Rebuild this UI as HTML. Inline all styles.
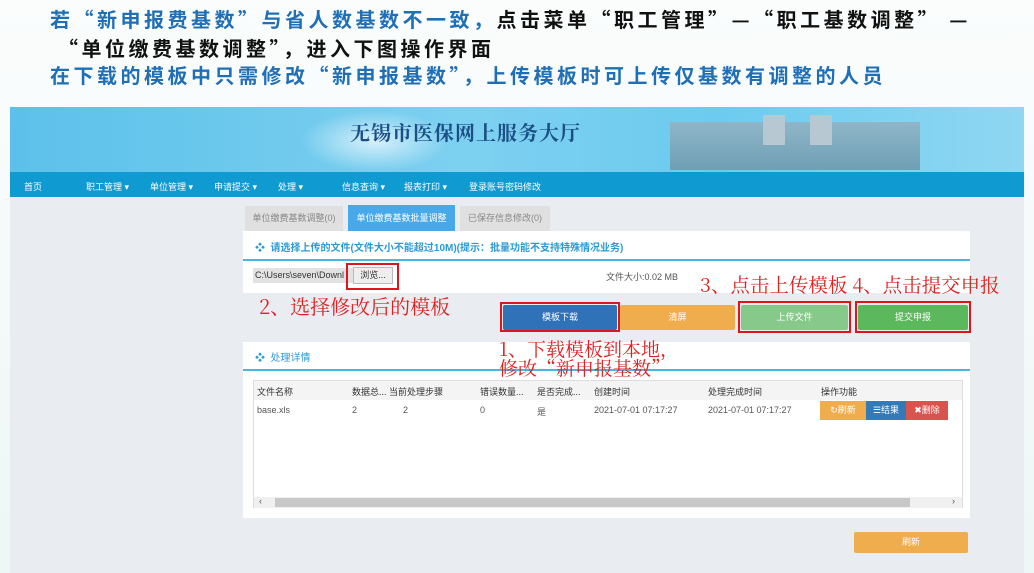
<!DOCTYPE html>
<html><head><meta charset="utf-8"><style>
*{margin:0;padding:0;box-sizing:border-box}
body{width:1034px;height:573px;position:relative;overflow:hidden;background:linear-gradient(#fbfdfd,#eef6f6);font-family:"Liberation Sans","Noto Sans CJK SC",sans-serif}
.a{position:absolute}
.h{font-family:"Noto Sans CJK SC",sans-serif;font-weight:bold;font-size:20px;color:#1f6fb7;left:50px;white-space:nowrap;letter-spacing:3.5px}
.k{color:#111}
.r{font-family:"Noto Serif CJK SC",serif;color:#e02020;font-size:20px;white-space:nowrap}
.nav span{position:absolute;top:8px;font-size:9px;color:#fff;white-space:nowrap}
.btn{position:absolute;top:305px;height:25px;color:#fff;font-size:9px;text-align:center;line-height:25px;border-radius:2px}
.box{position:absolute;border:2px solid #e0141c}
.th{position:absolute;top:385px;font-size:9px;color:#333;white-space:nowrap}
.td{position:absolute;top:405px;font-size:9px;color:#555;white-space:nowrap}
</style></head><body>
<div class="a h" style="top:4px">若“新申报费基数”与省人数基数不一致，<span class="k">点击菜单“职工管理”—“职工基数调整” —</span></div>
<div class="a h k" style="top:33px;left:58px">“单位缴费基数调整”，进入下图操作界面</div>
<div class="a h" style="top:60px">在下载的模板中只需修改“新申报基数”，上传模板时可上传仅基数有调整的人员</div>

<div class="a" style="left:10px;top:107px;width:1014px;height:65px;background:linear-gradient(90deg,#5cc1ea,#7dd0f0 45%,#6ccbef 70%,#8fd7f2)"></div>
<div class="a" style="left:300px;top:110px;width:150px;height:62px;background:radial-gradient(ellipse at center,rgba(255,255,255,.7),rgba(255,255,255,0) 70%)"></div>
<div class="a" style="left:670px;top:122px;width:250px;height:48px;background:linear-gradient(#8fb6c8,#6f9fb5)"></div>
<div class="a" style="left:763px;top:115px;width:22px;height:30px;background:#b7c8d2"></div>
<div class="a" style="left:810px;top:115px;width:22px;height:30px;background:#b7c8d2"></div>
<div class="a" style="left:350px;top:117px;font-family:'Noto Serif CJK SC',serif;font-weight:bold;font-size:20px;color:#1b4f86;letter-spacing:1px">无锡市医保网上服务大厅</div>

<div class="a nav" style="left:10px;top:172px;width:1014px;height:25px;background:#0f9ad1">
<span style="left:14px">首页</span><span style="left:76px">职工管理 ▾</span><span style="left:140px">单位管理 ▾</span><span style="left:204px">申请提交 ▾</span><span style="left:268px">处理 ▾</span><span style="left:332px">信息查询 ▾</span><span style="left:394px">报表打印 ▾</span><span style="left:459px">登录账号密码修改</span></div>

<div class="a" style="left:10px;top:197px;width:1014px;height:376px;background:#e9edf1"></div>
<div class="a" style="left:245px;top:206px;width:98px;height:25px;background:#e0e0e0;font-size:9px;color:#888;line-height:25px;text-align:center">单位缴费基数调整(0)</div>
<div class="a" style="left:348px;top:205px;width:107px;height:26px;background:#48a9ea;font-size:9px;color:#fff;line-height:26px;text-align:center">单位缴费基数批量调整</div>
<div class="a" style="left:460px;top:206px;width:90px;height:25px;background:#e0e0e0;font-size:9px;color:#888;line-height:25px;text-align:center">已保存信息修改(0)</div>

<div class="a" style="left:243px;top:231px;width:727px;height:62px;background:#fff"></div>
<div class="a" style="left:255px;top:239px;font-size:10px;font-weight:bold;color:#2a9ad6">❖ &nbsp;请选择上传的文件(文件大小不能超过10M)(提示：批量功能不支持特殊情况业务)</div>
<div class="a" style="left:243px;top:259px;width:727px;height:2px;background:#4ab5e3"></div>
<div class="a" style="left:253px;top:268px;width:105px;height:15px;background:#e2e2e2;font-size:9px;color:#333;line-height:15px;padding-left:2px;overflow:hidden;white-space:nowrap">C:\Users\seven\Downl</div>
<div class="a" style="left:353px;top:267px;width:40px;height:17px;background:#eee;border:1px solid #bbb;font-size:9px;color:#333;line-height:15px;text-align:center">浏览...</div>
<div class="a" style="left:606px;top:270px;font-size:9px;color:#555">文件大小:0.02 MB</div>
<div class="box" style="left:346px;top:263px;width:53px;height:27px"></div>

<div class="a r" style="left:259px;top:291px">2、选择修改后的模板</div>
<div class="a r" style="left:700px;top:270px;font-size:19.5px">3、点击上传模板 4、点击提交申报</div>

<div class="btn" style="left:503px;width:114px;background:#2f72b8">模板下载</div>
<div class="btn" style="left:620px;width:115px;background:#f0ad4e">清屏</div>
<div class="btn" style="left:741px;width:107px;background:#87c98a">上传文件</div>
<div class="btn" style="left:858px;width:110px;background:#5cb85c">提交申报</div>
<div class="box" style="left:500px;top:302px;width:120px;height:30px"></div>
<div class="box" style="left:738px;top:301px;width:113px;height:32px"></div>
<div class="box" style="left:855px;top:301px;width:116px;height:32px"></div>

<div class="a" style="left:243px;top:342px;width:727px;height:176px;background:#fff"></div>
<div class="a" style="left:255px;top:349px;font-size:10px;color:#2a9ad6">❖ &nbsp;处理详情</div>
<div class="a" style="left:243px;top:369px;width:727px;height:2px;background:#4ab5e3"></div>
<div class="a" style="left:253px;top:380px;width:710px;height:128px;border:1px solid #ddd"></div>
<div class="a" style="left:254px;top:381px;width:708px;height:19px;background:#f4f4f4"></div>
<div class="th" style="left:257px">文件名称</div><div class="th" style="left:352px">数据总...</div><div class="th" style="left:389px">当前处理步骤</div><div class="th" style="left:480px">错误数量...</div><div class="th" style="left:537px">是否完成...</div><div class="th" style="left:594px">创建时间</div><div class="th" style="left:708px">处理完成时间</div><div class="th" style="left:821px">操作功能</div>
<div class="td" style="left:257px">base.xls</div><div class="td" style="left:352px">2</div><div class="td" style="left:403px">2</div><div class="td" style="left:480px">0</div><div class="td" style="left:537px">是</div><div class="td" style="left:594px">2021-07-01 07:17:27</div><div class="td" style="left:708px">2021-07-01 07:17:27</div>
<div class="a" style="left:820px;top:401px;width:46px;height:19px;background:#f0ad4e;color:#fff;font-size:9px;line-height:19px;text-align:center">↻刷新</div>
<div class="a" style="left:866px;top:401px;width:40px;height:19px;background:#337ab7;color:#fff;font-size:9px;line-height:19px;text-align:center">☰结果</div>
<div class="a" style="left:906px;top:401px;width:42px;height:19px;background:#d9534f;color:#fff;font-size:9px;line-height:19px;text-align:center">✖删除</div>
<div class="a" style="left:254px;top:497px;width:708px;height:11px;background:#f0f0f0"></div>
<div class="a" style="left:275px;top:498px;width:635px;height:9px;background:#c8c8c8"></div>
<div class="a" style="left:259px;top:496px;font-size:9px;color:#555">‹</div>
<div class="a" style="left:952px;top:496px;font-size:9px;color:#555">›</div>

<div class="a r" style="left:499px;top:339px;line-height:19px;font-size:19px">1、下载模板到本地，<br>修改“新申报基数”</div>

<div class="a" style="left:854px;top:532px;width:114px;height:21px;background:#f0ad4e;border-radius:2px;color:#fff;font-size:9px;line-height:21px;text-align:center">刷新</div>
</body></html>
